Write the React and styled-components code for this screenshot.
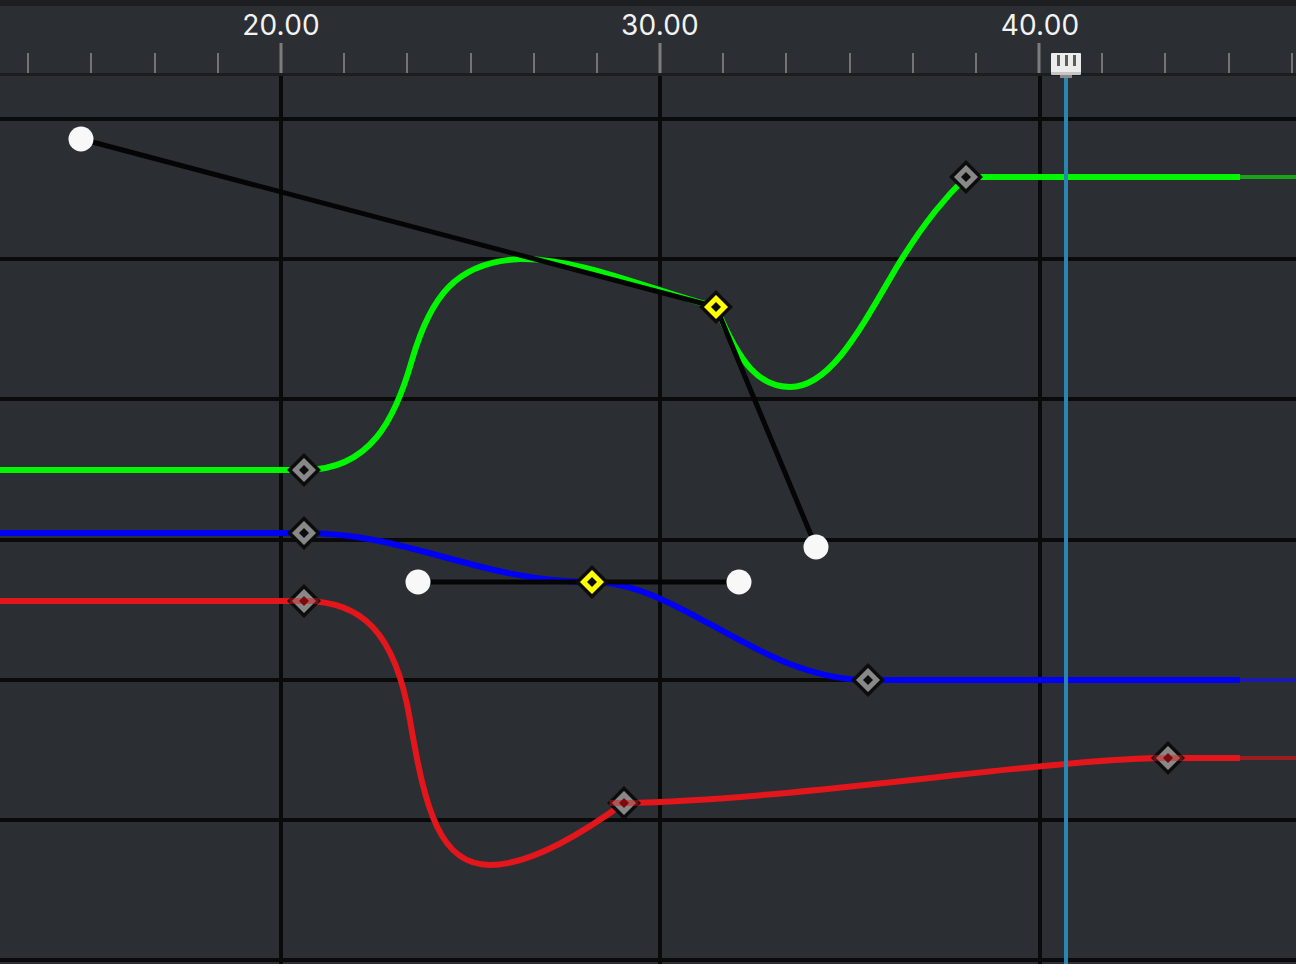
import React from "react";
import styled, { createGlobalStyle } from "styled-components";

const GlobalStyle = createGlobalStyle`
  html, body {
    margin: 0;
    padding: 0;
    background: #2b2e33;
  }
  body {
    font-family: Inter, "Noto Sans", "Liberation Sans", sans-serif;
  }
`;

const BG = "#2b2e33";
const PX_PER_TICK = 63.17;
const ZERO_X = 281;

const Editor = styled.div`
  position: relative;
  width: 1296px;
  height: 964px;
  display: flex;
  flex-direction: column;
  background: ${BG};
  overflow: hidden;
`;

const TopStrip = styled.div`
  height: 6px;
  background: #1c1e22;
`;

const Ruler = styled.div`
  position: relative;
  height: 67px;
  background: ${BG};
`;

const Tick = styled.div`
  position: absolute;
  bottom: 0;
  width: ${(p) => (p.$major ? 3 : 2)}px;
  height: ${(p) => (p.$major ? 30 : 20)}px;
  background: ${(p) => (p.$major ? "#7c7c7c" : "#747474")};
  transform: translateX(-50%);
`;

const TickLabel = styled.span`
  position: absolute;
  top: 5px;
  transform: translateX(-50%);
  font-size: 28px;
  line-height: 1;
  color: #f2f2f2;
  letter-spacing: 0.2px;
`;

const RulerDivider = styled.div`
  height: 3px;
  background: #1b1d20;
`;

const Graph = styled.div`
  flex: 1;
  position: relative;
  svg {
    display: block;
  }
`;

const PlayheadHandle = styled.div`
  position: absolute;
  top: 53px;
  width: 30px;
  height: 17px;
  background: #ececec;
  border-bottom: 3px solid #c6c6c6;
  border-radius: 1px;
  display: flex;
  justify-content: center;
  align-items: flex-start;
  gap: 5px;
  padding-top: 2px;
  box-sizing: content-box;
  transform: translateX(-50%);
  z-index: 3;
  &::after {
    content: "";
    position: absolute;
    left: 9px;
    bottom: -6px;
    width: 12px;
    height: 3px;
    background: #8a8a8a;
  }
`;

const Grip = styled.span`
  width: 3px;
  height: 11px;
  background: #5c5c5c;
`;

const PlayheadLine = styled.div`
  position: absolute;
  top: 76px;
  bottom: 0;
  width: 4px;
  background: #2a86b1;
  transform: translateX(-50%);
  z-index: 2;
`;

const ticks = [];
for (let i = -4; i <= 16; i++) {
  ticks.push({ x: ZERO_X + i * PX_PER_TICK, major: i % 6 === 0, i });
}
const labels = [
  { x: 281, text: "20.00" },
  { x: 660, text: "30.00" },
  { x: 1040, text: "40.00" },
];

const hLines = [119, 259, 399, 540, 680, 820, 960];
const vLines = [281, 660, 1040];

const curves = [
  {
    color: "#00f700",
    tail: "#18a318",
    path:
      "M0,470 H304 C370,470 395,420 412,360 C430,298 455,262 520,259 C580,258 650,290 716,307 C740,365 760,387 790,387 C830,387 860,330 895,270 C925,220 948,195 966,177 H1240",
    endY: 177,
  },
  {
    color: "#0000f2",
    tail: "#1a1ab0",
    path:
      "M0,533 H304 C410,533 480,582 592,582 C680,582 760,680 868,680 H1240",
    endY: 680,
  },
  {
    color: "#e3161b",
    tail: "#9c1c20",
    path:
      "M0,601 H304 C360,601 395,630 410,720 C425,810 440,865 490,865 C530,865 580,835 624,803 C800,800 1050,758 1168,758 H1240",
    endY: 758,
  },
];

const keys = [
  { x: 304, y: 470 },
  { x: 716, y: 307, selected: true },
  { x: 966, y: 177 },
  { x: 304, y: 533 },
  { x: 592, y: 582, selected: true },
  { x: 868, y: 680 },
  { x: 304, y: 601, tint: "#e3161b" },
  { x: 624, y: 803, tint: "#e3161b" },
  { x: 1168, y: 758, tint: "#e3161b" },
];

const handleLines = [
  "M81,139 L716,307 L816,547",
  "M418,582 L739,582",
];
const handleDots = [
  [81, 139],
  [816, 547],
  [418, 582],
  [739, 582],
];

const Key = ({ x, y, selected, tint }) => {
  const r = 14.5;
  const c = 5;
  const d = (s) => `${x},${y - s} ${x + s},${y} ${x},${y + s} ${x - s},${y}`;
  return (
    <g>
      <polygon
        points={d(r)}
        fill={selected ? "#ffff00" : "#888888"}
        stroke="#0c0c0c"
        strokeWidth="3.5"
        strokeLinejoin="miter"
      />
      {tint && (
        <line
          x1={x - r}
          y1={y}
          x2={x + r}
          y2={y}
          stroke={tint}
          strokeWidth="6"
          opacity="0.45"
        />
      )}
      <polygon points={d(c)} fill={tint ? "#7a0a0c" : "#0c0c0c"} />
    </g>
  );
};

export default function App() {
  return (
    <>
      <GlobalStyle />
      <Editor>
        <TopStrip />
        <Ruler>
          {ticks.map((t) => (
            <Tick key={t.i} $major={t.major} style={{ left: t.x }} />
          ))}
          {labels.map((l) => (
            <TickLabel key={l.text} style={{ left: l.x }}>
              {l.text}
            </TickLabel>
          ))}
        </Ruler>
        <RulerDivider />
        <Graph>
          <svg width="1296" height="888" viewBox="0 76 1296 888">
            {hLines.map((y) => (
              <line key={"h" + y} x1="0" x2="1296" y1={y} y2={y} stroke="#0a0a0a" strokeWidth="4" />
            ))}
            {vLines.map((x) => (
              <line key={"v" + x} x1={x} x2={x} y1="76" y2="964" stroke="#0a0a0a" strokeWidth="4" />
            ))}
            {curves.map((c, i) => (
              <g key={i}>
                <path d={c.path} fill="none" stroke={c.color} strokeWidth="6" />
                <line x1="1240" x2="1296" y1={c.endY} y2={c.endY} stroke={c.tail} strokeWidth="4" />
              </g>
            ))}
            {handleLines.map((p, i) => (
              <path key={i} d={p} fill="none" stroke="#050505" strokeWidth="5" strokeLinejoin="round" />
            ))}
            {keys.map((k, i) => (
              <Key key={i} {...k} />
            ))}
            {handleDots.map(([x, y], i) => (
              <circle key={i} cx={x} cy={y} r="12.5" fill="#f8f8f8" />
            ))}
          </svg>
        </Graph>
        <PlayheadHandle style={{ left: 1066 }}>
          <Grip />
          <Grip />
          <Grip />
        </PlayheadHandle>
        <PlayheadLine style={{ left: 1066 }} />
      </Editor>
    </>
  );
}
